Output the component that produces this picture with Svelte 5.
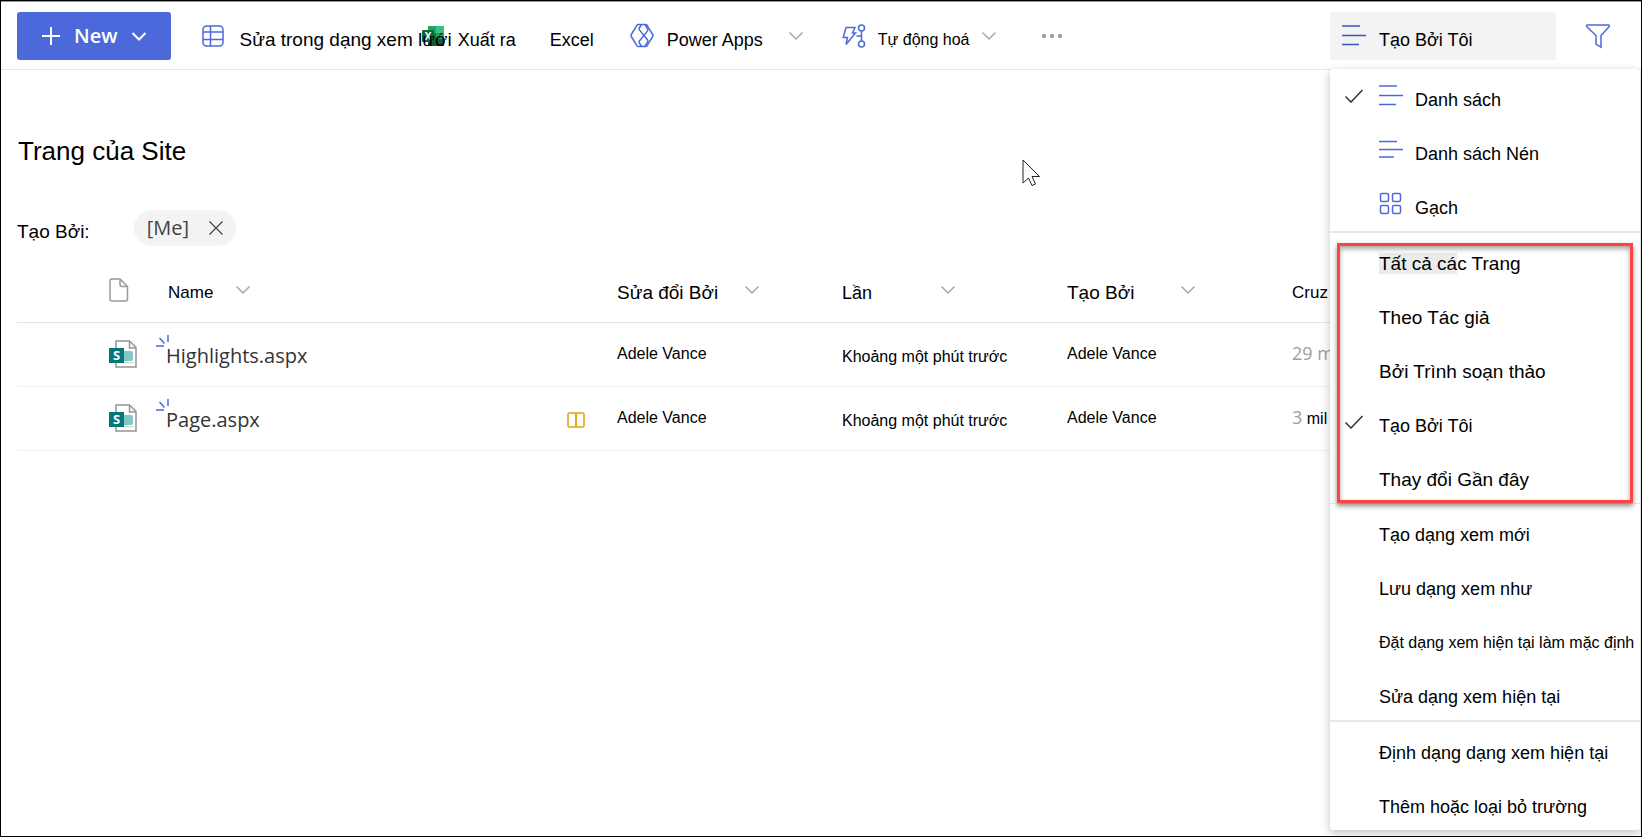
<script lang="ts">
  // Columns of the page library
  const columns = [
    { id: 'name', label: 'Name', sortable: true },
    { id: 'editor', label: 'Sửa đổi Bởi', sortable: true },
    { id: 'modified', label: 'Lần', sortable: true },
    { id: 'author', label: 'Tạo Bởi', sortable: true },
    { id: 'created', label: 'Cruz', sortable: false },
  ]

  const pages = [
    { name: 'Highlights.aspx', editor: 'Adele Vance', modified: 'Khoảng một phút trước', author: 'Adele Vance', amount: '29 m', unit: '', draft: false },
    { name: 'Page.aspx', editor: 'Adele Vance', modified: 'Khoảng một phút trước', author: 'Adele Vance', amount: '3', unit: 'mil', draft: true },
  ]

  // View menu
  const layouts = [
    { id: 'list', label: 'Danh sách' },
    { id: 'compact', label: 'Danh sách Nén' },
    { id: 'tiles', label: 'Gạch' },
  ]
  const views = [
    { id: 'all', marked: 'Tất cả cá', label: 'c Trang', large: true },
    { id: 'byAuthor', label: 'Theo Tác giả', large: true },
    { id: 'byEditor', label: 'Bởi Trình soạn thảo', large: true },
    { id: 'mine', label: 'Tạo Bởi Tôi' },
    { id: 'recent', label: 'Thay đổi Gần đây', large: true },
  ]
  const viewActions = [
    { label: 'Tạo dạng xem mới' },
    { label: 'Lưu dạng xem như' },
    { label: 'Đặt dạng xem hiện tại làm mặc định', small: true },
    { label: 'Sửa dạng xem hiện tại' },
  ]
  const formatActions = ['Định dạng dạng xem hiện tại', 'Thêm hoặc loại bỏ trường']

  let layout = $state('list')
  let view = $state('mine')
  let menuOpen = $state(true)
  let filtered = $state(true)
</script>

{#snippet chevron()}
  <svg class="chevron" viewBox="0 0 16 16" width="16" height="16"><path d="M1.500 4.500 8 11l6.500-6.500" /></svg>
{/snippet}

{#snippet check(on)}
  <span class="check">
    {#if on}
      <svg viewBox="0 0 18 14" width="18" height="14"><path d="M.5 7.500 6 13 17.500 1" /></svg>
    {/if}
  </span>
{/snippet}

{#snippet lines(compact)}
  <svg class="icon" viewBox="0 0 24 24" width="24" height="24">
    {#if compact}
      <path d="M0 3.500h18M0 11.500h24M0 19h15" />
    {:else}
      <path d="M0 2h18M0 11.500h24M0 20.500h17" />
    {/if}
  </svg>
{/snippet}

<div class="app">
  <header class="bar">
    <button class="new">
      <svg viewBox="0 0 20 20" width="20" height="20"><path d="M10 1v18M1 10h18" /></svg>
      New
      <svg viewBox="0 0 16 16" width="16" height="16"><path d="M1.500 5 8 11.500 14.500 5" /></svg>
    </button>

    <nav class="commands">
      <button class="command grid-edit">
        <svg class="icon" viewBox="0 0 22 22" width="22" height="22">
          <rect x="1" y="1" width="20" height="20" rx="3.500" />
          <path d="M8.500 1v20M1 7h20M1 14.500h20" />
        </svg>
        <span class="label large">Sửa trong dạng xem lưới</span>
      </button>
      <button class="command export">
        <svg viewBox="0 0 22 20" width="22" height="20">
          <rect x="6" width="8" height="10" fill="#21a366" />
          <rect x="14" width="8" height="7" fill="#33c481" />
          <rect x="14" y="7" width="8" height="6" fill="#21a366" />
          <rect x="6" y="7" width="8" height="7" fill="#107c41" />
          <rect x="6" y="13" width="16" height="7" fill="#185c37" />
          <rect y="4" width="12" height="12" rx="1" fill="#0b6a38" />
          <text x="6" y="14" text-anchor="middle" class="excel-mark">X</text>
        </svg>
        <span class="label">Xuất ra</span>
      </button>
      <button class="command excel"><span class="label">Excel</span></button>
      <button class="command power">
        <svg class="icon" viewBox="0 0 24 26" width="24" height="26">
          <path d="M8.500 1.500h7q1 0 1.600.8l5.600 9.200q.6 1 0 2l-5.600 9.200q-.6.8-1.600.8h-7q-1 0-1.600-.8L1.300 13.500q-.6-1 0-2L6.900 2.300q.6-.8 1.600-.8z" />
          <path d="M11.500 1.500 9.300 5q-.6 1 .1 1.900l8.200 10.100q.7.900.1 1.900l-3 4.600M15 1.500 17.700 6q.6 1-.1 1.900L9.400 18q-.7.900-.1 1.900l2.200 3.600" />
        </svg>
        <span class="label">Power Apps</span>
        {@render chevron()}
      </button>
      <button class="command automate">
        <svg class="icon" viewBox="0 0 24 24" width="24" height="24">
          <path d="M4 3.500h9l-2.500 5.500h3L4 20.500l1.500-7H1.200z" />
          <circle cx="19.500" cy="4" r="3" />
          <circle cx="19.500" cy="20" r="3" />
          <path d="M19.500 7v10M19.500 12h-5" />
        </svg>
        <span class="label small">Tự động hoá</span>
        {@render chevron()}
      </button>
      <button class="command more" aria-label="More">
        <svg viewBox="0 0 22 6" width="22" height="6">
          <circle cx="3" cy="3" r="2.200" /><circle cx="11" cy="3" r="2.200" /><circle cx="19" cy="3" r="2.200" />
        </svg>
      </button>
    </nav>

    <div class="view-picker">
      <button class="current-view" aria-expanded={menuOpen} onclick={() => (menuOpen = !menuOpen)}>
        {@render lines(false)}
        <span class="label">Tạo Bởi Tôi</span>
      </button>

      {#if menuOpen}
        <div class="menu">
          <ul>
            {#each layouts as item (item.id)}
              <li>
                <button onclick={() => (layout = item.id)}>
                  {@render check(layout === item.id)}
                  {#if item.id === 'tiles'}
                    <svg class="icon" viewBox="0 0 24 24" width="24" height="24">
                      <rect x="1.500" y="1.500" width="8" height="8" rx="1.500" />
                      <rect x="13.500" y="1.500" width="8" height="8" rx="1.500" />
                      <rect x="1.500" y="13.500" width="8" height="8" rx="1.500" />
                      <rect x="13.500" y="13.500" width="8" height="8" rx="1.500" />
                    </svg>
                  {:else}
                    {@render lines(item.id === 'compact')}
                  {/if}
                  <span class="label">{item.label}</span>
                </button>
              </li>
            {/each}
          </ul>
          <ul class="views">
            {#each views as item (item.id)}
              <li>
                <button onclick={() => (view = item.id)}>
                  {@render check(view === item.id)}
                  <span class="label" class:large={item.large}>{#if item.marked}<mark>{item.marked}</mark>{/if}{item.label}</span>
                </button>
              </li>
            {/each}
          </ul>
          <ul class="thin">
            {#each viewActions as item}
              <li><button>{@render check(false)}<span class="label" class:small={item.small}>{item.label}</span></button></li>
            {/each}
          </ul>
          <ul>
            {#each formatActions as label}
              <li><button>{@render check(false)}<span class="label">{label}</span></button></li>
            {/each}
          </ul>
        </div>
      {/if}
    </div>

    <button class="filter" aria-label="Filter">
      <svg class="icon" viewBox="0 0 26 26" width="26" height="26">
        <path d="M2.500 2h21c1 0 1.200 1 .6 1.700L16 12.500v11.700l-5-3v-8.700L1.900 3.700C1.300 3 1.500 2 2.500 2z" />
      </svg>
    </button>
  </header>

  <main>
    <h1>Trang của Site</h1>

    <div class="filters">
      <span class="filter-name large">Tạo Bởi:</span>
      {#if filtered}
        <span class="chip">
          [Me]
          <button aria-label="Remove" onclick={() => (filtered = false)}>
            <svg viewBox="0 0 14 14" width="14" height="14"><path d="M.5.5l13 13M13.500.5l-13 13" /></svg>
          </button>
        </span>
      {/if}
    </div>

    <table>
      <thead>
        <tr>
          <th class="type">
            <svg class="file" viewBox="0 0 20 24" width="20" height="24">
              <path d="M3 1h8l7.500 7.500V21a2 2 0 0 1-2 2H3a2 2 0 0 1-2-2V3a2 2 0 0 1 2-2zM11 1v5.500a2 2 0 0 0 2 2h5.500" />
            </svg>
          </th>
          {#each columns as column (column.id)}
            <th class={column.id}>
              <button class="heading">
                <span class="heading-label">{column.label}</span>
                {#if column.sortable}{@render chevron()}{/if}
              </button>
            </th>
          {/each}
        </tr>
      </thead>
      <tbody>
        {#each pages as page (page.name)}
          <tr>
            <td class="type">
              <svg class="aspx" viewBox="0 0 28 28" width="28" height="28">
                <path d="M7 1h13.500l6.500 6.500V27H7z" fill="#fff" stroke="#959595" stroke-width="1.500" />
                <path d="M20.500 1v7H27" fill="none" stroke="#959595" stroke-width="1.500" />
                <rect x="12" y="11" width="12" height="10" rx="2" fill="#80c8c1" />
                <path d="M14 22.800h10" stroke="#c8c8c8" />
                <rect y="8" width="15" height="15" fill="#03787c" />
                <text x="7.500" y="20" text-anchor="middle" class="aspx-mark">S</text>
              </svg>
            </td>
            <td class="name">
              <div class="name-cell">
                <a href="#{page.name}">
                  <svg class="fresh" viewBox="0 0 14 14" width="14" height="14"><path d="M0 12h8M3.500 4l5 5.500M12 1v7" /></svg>
                  {page.name}
                </a>
                {#if page.draft}
                  <svg class="draft" viewBox="0 0 18 16" width="18" height="16">
                    <rect x="1" y="1" width="8" height="14" rx="1" /><rect x="9" y="1" width="8" height="14" rx="1" />
                  </svg>
                {/if}
              </div>
            </td>
            <td>{page.editor}</td>
            <td class="modified">{page.modified}</td>
            <td>{page.author}</td>
            <td><span class="amount">{page.amount}</span> {page.unit}</td>
          </tr>
        {/each}
      </tbody>
    </table>
  </main>

  <svg class="pointer" viewBox="0 0 19 28" width="19" height="28">
    <path d="M1 1v23l5.500-5 3.500 7.500 3.500-1.500L10 17.500h7.500z" />
  </svg>
</div>

<style>
  :global(body) {
    background: #fff;
  }
  .app {
    position: relative;
    box-sizing: border-box;
    min-height: 100vh;
    border: 1px solid #000;
    color: #000;
    font-family: "Liberation Sans", Arial, sans-serif;
    font-size: 18px;
    line-height: 24px;
  }
  button {
    display: flex;
    align-items: center;
    padding: 0;
    border: 0;
    background: none;
    color: inherit;
    font: inherit;
    text-align: left;
    white-space: nowrap;
  }
  svg {
    flex: none;
    fill: none;
  }
  ul {
    margin: 0;
    padding: 0;
    list-style: none;
  }
  .small {
    font-size: 16px;
  }
  .large {
    font-size: 19px;
  }
  .icon {
    stroke: #4b69db;
    stroke-width: 1.5;
  }
  .chevron {
    stroke: #a6a6a6;
    stroke-width: 1.5;
  }
  .label {
    padding-top: 8px;
  }

  /* Command bar */
  .bar {
    display: flex;
    align-items: center;
    height: 48px;
    padding: 10px 16px 9px;
    border-top: 1px solid #8291e0;
    border-bottom: 1px solid #e6e6e6;
  }
  .new {
    gap: 13px;
    height: 48px;
    padding: 0 24px;
    border-radius: 3px;
    background: #4b69db;
    color: #fff;
    font-family: "Open Sans", sans-serif;
    font-size: 20px;
    font-weight: 600;
  }
  .new svg {
    stroke: #fff;
    stroke-width: 2;
  }
  .commands {
    display: flex;
    flex: 1;
    height: 48px;
    margin-left: 31px;
  }
  .grid-edit {
    position: relative;
    z-index: 1;
    gap: 16px;
  }
  /* the export icon sits under the end of the grid label */
  .export {
    gap: 14px;
    margin-left: -30px;
  }
  .excel {
    margin-left: 34px;
  }
  .power {
    gap: 13px;
    margin-left: 36px;
  }
  .power .chevron {
    margin-left: 12px;
  }
  .automate {
    gap: 12px;
    margin-left: 38px;
  }
  .more {
    margin-left: 44px;
  }
  .more svg {
    fill: #a0a0a0;
  }
  .excel-mark,
  .aspx-mark {
    fill: #fff;
    font-family: "Open Sans", sans-serif;
    font-size: 10px;
    font-weight: 700;
  }
  .aspx-mark {
    font-size: 13px;
  }
  .view-picker {
    position: relative;
    width: 226px;
  }
  .current-view {
    gap: 13px;
    width: 100%;
    height: 48px;
    padding: 0 12px;
    border-radius: 3px;
    background: #f3f3f3;
  }
  .current-view .icon {
    stroke: #3b55b5;
  }
  .filter {
    margin: 0 14px 0 29px;
  }

  /* View menu */
  .menu {
    position: absolute;
    z-index: 2;
    top: 57px;
    left: 0;
    width: 310px;
    border-radius: 3px;
    background: #fff;
    box-shadow: 0 3px 10px rgba(0, 0, 0, 0.25);
  }
  .menu ul + ul {
    border-top: 2px solid #e8e8e8;
  }
  .menu ul.thin {
    border-top-width: 1px;
  }
  .menu button {
    width: 100%;
    height: 54px;
    padding-left: 15px;
  }
  .menu .icon {
    margin-right: 12px;
  }
  .check {
    display: flex;
    width: 34px;
  }
  .check svg {
    stroke: #333;
    stroke-width: 1.5;
  }
  .views {
    position: relative;
  }
  .views::after {
    content: "";
    position: absolute;
    inset: 10px 7px 0;
    border: 3px solid #ff4343;
    box-shadow: 0 3px 5px rgba(0, 0, 0, 0.45), inset 0 3px 5px rgba(0, 0, 0, 0.35);
    pointer-events: none;
  }
  mark {
    background: #ebebeb;
    color: inherit;
  }

  /* Library */
  main {
    padding: 64px 0 0 16px;
    overflow: hidden;
  }
  h1 {
    margin: 0;
    padding-left: 1px;
    font-size: 26px;
    font-weight: 400;
    line-height: 34px;
  }
  .filters {
    display: flex;
    align-items: center;
    gap: 44px;
    height: 36px;
    margin-top: 42px;
  }
  .filter-name {
    padding-top: 8px;
  }
  .chip {
    display: flex;
    align-items: center;
    gap: 20px;
    height: 36px;
    padding: 0 13px;
    border-radius: 18px;
    background: #f3f3f3;
    color: #444;
    font-family: "Open Sans", sans-serif;
    font-size: 20px;
  }
  .chip svg {
    stroke: #444;
    stroke-width: 1.2;
  }
  table {
    width: 100%;
    margin-top: 12px;
    border-collapse: collapse;
    table-layout: fixed;
  }
  th,
  td {
    box-sizing: border-box;
    height: 64px;
    padding: 0 0 0 8px;
    border-bottom: 1px solid #f0f0f0;
    font-weight: 400;
    text-align: left;
    white-space: nowrap;
  }
  th {
    border-bottom-color: #e4e4e4;
  }
  td {
    font-size: 16px;
  }
  .type {
    width: 143px;
    padding-left: 92px;
  }
  .type svg {
    display: block;
  }
  .file {
    stroke: #9a9a9a;
    stroke-width: 1.5;
  }
  th.name {
    width: 449px;
  }
  th.editor,
  th.modified,
  th.author {
    width: 225px;
  }
  .heading {
    gap: 26px;
  }
  .heading-label {
    padding-top: 6px;
  }
  .name .heading,
  .created .heading {
    gap: 22px;
    font-size: 17px;
  }
  .editor .heading,
  .author .heading {
    font-size: 19px;
  }
  .modified .heading {
    gap: 68px;
  }
  .author .heading {
    gap: 46px;
  }
  td.modified {
    padding-top: 5px;
  }
  td.name {
    padding-left: 6px;
  }
  .name-cell {
    display: flex;
    align-items: center;
    justify-content: space-between;
    padding: 4px 24px 0 0;
  }
  a {
    position: relative;
    color: #333;
    font-family: "Open Sans", sans-serif;
    font-size: 20px;
    text-decoration: none;
  }
  .fresh {
    position: absolute;
    top: -10px;
    left: -10px;
    stroke: #4b69db;
    stroke-width: 1.5;
  }
  .draft {
    stroke: #dfa214;
    stroke-width: 1.5;
  }
  .amount {
    color: #a0a0a0;
    font-family: "Open Sans", sans-serif;
    font-size: 18px;
  }

  .pointer {
    position: absolute;
    top: 158px;
    left: 1021px;
    fill: #fff;
    stroke: #222;
  }
</style>
